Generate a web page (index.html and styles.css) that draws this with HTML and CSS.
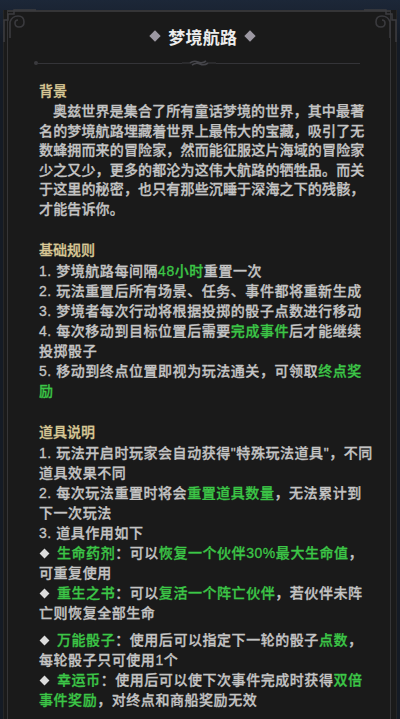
FILE: index.html
```html
<!DOCTYPE html>
<html lang="zh-CN">
<head>
  <meta charset="UTF-8">
  <title>梦境航路</title>
  <link rel="stylesheet" href="styles.css">
</head>
<body>

  <div class="panel">
    <svg class="corner corner-left" width="34" height="34" viewBox="0 0 34 34">
      <path d="M2 34 V12 H6 V6 H12 V2 H34" fill="none" stroke="#3c3c40" stroke-width="1.5"/>
      <path d="M8 30 V14 Q10 8 16 8 Q22 8 22 14 Q22 19 17 19 Q13 19 13 15 Q13 12 16 12" fill="none" stroke="#3a3a3e" stroke-width="1.6"/>
    </svg>
    <svg class="corner corner-right" width="34" height="34" viewBox="0 0 34 34">
      <path d="M2 34 V12 H6 V6 H12 V2 H34" fill="none" stroke="#3c3c40" stroke-width="1.5"/>
      <path d="M8 30 V14 Q10 8 16 8 Q22 8 22 14 Q22 19 17 19 Q13 19 13 15 Q13 12 16 12" fill="none" stroke="#3a3a3e" stroke-width="1.6"/>
    </svg>

    <div class="title">
      <span class="diamond"></span>
      <h1>梦境航路</h1>
      <span class="diamond"></span>
    </div>

    <div class="divider">
      <span class="dot"></span>
      <span class="line"></span>
      <svg class="ornament" width="34" height="10" viewBox="0 0 34 10">
        <path d="M0 5 H8 M26 5 H34" stroke="#3a3a3e" stroke-width="1.2"/>
        <path d="M8 5 Q12 2 16 4 Q20 6 24 3 M10 7 Q14 4 18 6 Q22 8 26 5" fill="none" stroke="#45454a" stroke-width="1.6"/>
      </svg>
      <span class="line"></span>
    </div>

    <section class="block">
      <h2>背景</h2>
      <p class="story">奥兹世界是集合了所有童话梦境的世界，其中最著名的梦境航路埋藏着世界上最伟大的宝藏，吸引了无数蜂拥而来的冒险家，然而能征服这片海域的冒险家少之又少，更多的都沦为这伟大航路的牺牲品。而关于这里的秘密，也只有那些沉睡于深海之下的残骸，才能告诉你。</p>
    </section>

    <section class="block">
      <h2>基础规则</h2>
      <ul class="list">
        <li>1. 梦境航路每间隔<em>48小时</em>重置一次</li>
        <li>2. 玩法重置后所有场景、任务、事件都将重新生成</li>
        <li>3. 梦境者每次行动将根据投掷的骰子点数进行移动</li>
        <li>4. 每次移动到目标位置后需要<em>完成事件</em>后才能继续投掷骰子</li>
        <li>5. 移动到终点位置即视为玩法通关，可领取<em>终点奖励</em></li>
      </ul>
    </section>

    <section class="block">
      <h2>道具说明</h2>
      <ul class="list">
        <li>1. 玩法开启时玩家会自动获得"特殊玩法道具"，不同道具效果不同</li>
        <li>2. 每次玩法重置时将会<em>重置道具数量</em>，无法累计到下一次玩法</li>
        <li>3. 道具作用如下</li>
        <li><span class="bullet"></span><em>生命药剂</em>：可以<em>恢复一个伙伴30%最大生命值</em>，可重复使用</li>
        <li class="gap-after"><span class="bullet"></span><em>重生之书</em>：可以<em>复活一个阵亡伙伴</em>，若伙伴未阵亡则恢复全部生命</li>
        <li><span class="bullet"></span><em>万能骰子</em>：使用后可以指定下一轮的骰子<em>点数</em>，每轮骰子只可使用1个</li>
        <li><span class="bullet"></span><em>幸运币</em>：使用后可以使下次事件完成时获得<em>双倍事件奖励</em>，对终点和商船奖励无效</li>
      </ul>
    </section>
  </div>

</body>
</html>
```

FILE: styles.css
```css
body {
  margin: 0;
  height: 719px;
  overflow: hidden;
  background: linear-gradient(180deg, #1c2738 0%, #151b25 40px);
  font-family: "Liberation Sans", "Noto Sans CJK SC", sans-serif;
  font-weight: 500;
  color: #c4c4c4;
}

.panel {
  position: relative;
  margin: 10px 3px 0;
  min-height: 760px;
  padding: 12px 21.5px 0 35px;
  background-color: #1a1a1a;
  border-left: 1px solid #262626;
  border-right: 1px solid #262626;
  box-shadow: inset 3px 0 0 #1a1a1a, inset 4px 0 0 #353537, inset -5px 0 0 #1a1a1a, inset -6px 0 0 #353537, inset 0 2px 0 #353537;
}

.corner {
  position: absolute;
  top: -2px;
}

.corner-left {
  left: -2px;
}

.corner-right {
  right: -2px;
  transform: scaleX(-1);
}

.title {
  display: flex;
  align-items: center;
  justify-content: center;
  gap: 9px;
  height: 28px;
  margin-right: 8px;
}

.title h1 {
  margin: 0;
  font-size: 17px;
  font-weight: bold;
  color: #ececec;
  letter-spacing: 0.3px;
}

.diamond {
  width: 8px;
  height: 8px;
  background-color: #9c98a2;
  transform: rotate(45deg);
}

.divider {
  display: flex;
  align-items: center;
  margin: 8px 15px 0 -5px;
  height: 10px;
}

.divider .dot {
  width: 4px;
  height: 4px;
  border-radius: 50%;
  background-color: #3a3a3e;
}

.divider .line {
  flex: 1;
  height: 1px;
  background-color: #343438;
}

.block {
  margin-top: 13px;
  -webkit-text-stroke: 0.3px currentColor;
}

.block + .block {
  margin-top: 21px;
}

.block h2 {
  margin: 0 0 1px;
  font-size: 14px;
  font-weight: 500;
  line-height: 20px;
  color: #d8c896;
}

.story {
  margin: 0;
  font-size: 14px;
  line-height: 19.5px;
  letter-spacing: 0.15px;
  text-indent: 14px;
}

.list {
  list-style: none;
  margin: 0;
  padding: 0;
  font-size: 14px;
  line-height: 20px;
  letter-spacing: 0.55px;
}

.list em {
  font-style: normal;
  color: #3cc647;
}

.bullet {
  display: inline-block;
  width: 7px;
  height: 7px;
  margin: 0 9px 1px 2px;
  background-color: #dcdcdc;
  transform: rotate(45deg);
}

.gap-after {
  margin-bottom: 7px;
}
```
